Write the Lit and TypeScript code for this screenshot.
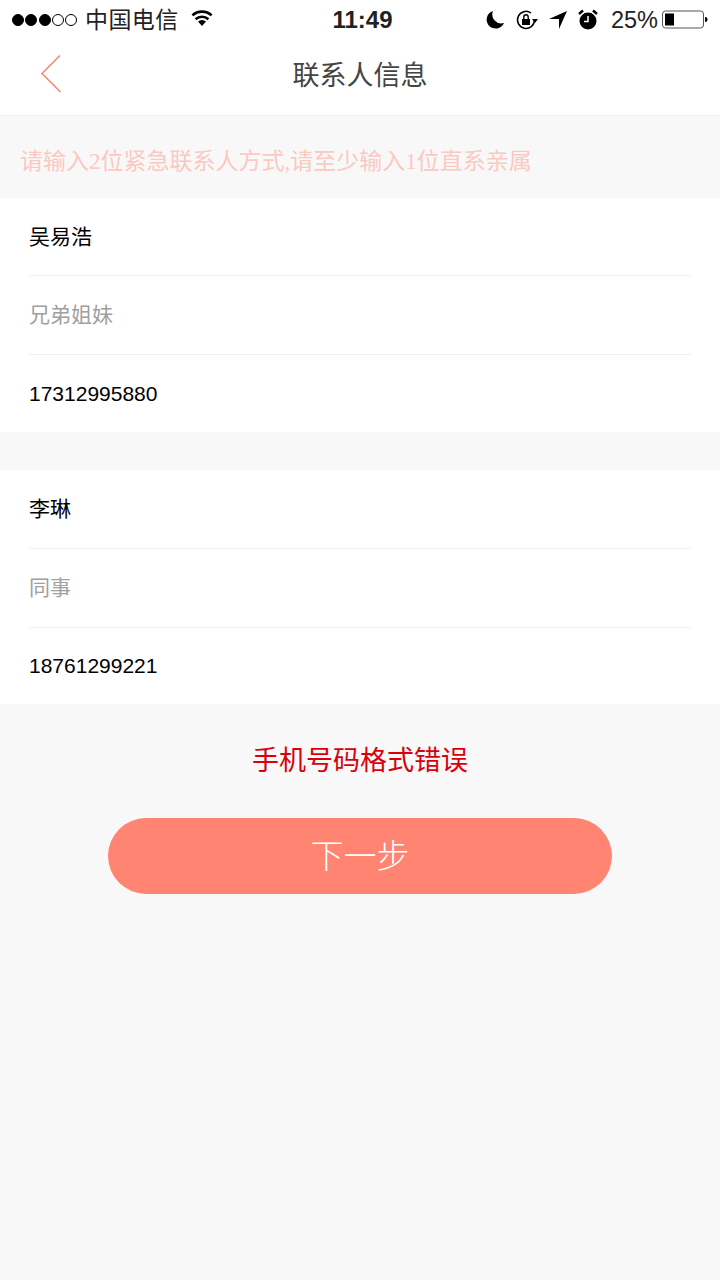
import { LitElement, html, css } from "lit";
import { customElement } from "lit/decorators.js";

@customElement("app-root")
export class AppRoot extends LitElement {
  static styles = css`
    :host { display: block; width: 720px; height: 1280px; background: #f8f8f8; font-family: "Liberation Sans", "Noto Sans CJK SC", sans-serif; overflow: hidden; }
    .top { background: #fff; height: 115px; border-bottom: 1px solid #f2f2f2; }
    .status { height: 40px; display: flex; align-items: center; padding: 0 12px; position: relative; color: #111; font-size: 24px; }
    .dots { display: flex; gap: 1.250px; margin-right: 8px; }
    .dot { width: 12px; height: 12px; border-radius: 50%; background: #000; border: 1px solid #000; box-sizing: border-box; }
    .dot.off { background: none; }
    .carrier { font-size: 23px; letter-spacing: 0.400px; color: #222; position: relative; top: -2px; }
    .wifi { margin-left: 11px; position: relative; top: -2px; }
    .time { position: absolute; left: 5px; right: 0; top: 5px; text-align: center; font-size: 24px; line-height: 30px; font-weight: 700; color: #222; }
    .right { margin-left: auto; display: flex; align-items: center; z-index: 1; margin-right: -1px; }
    .moon { margin-right: 10px; }
    .lock { margin-right: 9px; }
    .arrow { margin-right: 10px; }
    .pct { font-size: 23.500px; margin-left: 13px; color: #222; }
    .battery { margin-left: 4px; }
    .nav { height: 75px; display: flex; align-items: center; justify-content: center; position: relative; }
    .back { position: absolute; left: 40px; top: 14px; }
    .title { font-size: 27px; line-height: 40px; color: #444; position: relative; top: -2px; }
    .hint { height: 82px; display: flex; align-items: center; padding-left: 20px; padding-top: 10px; box-sizing: border-box; font-size: 23px; line-height: 30px; color: #fbc9c1; font-family: "Liberation Serif", "Noto Sans CJK SC", serif; }
    .card { background: #fff; padding: 0 29px; }
    .row { height: 78px; box-sizing: border-box; display: flex; align-items: center; font-size: 21px; line-height: 30px; color: #000; border-bottom: 1px solid #f0f0f0; }
    .row:nth-child(2) { height: 79px; }
    .row:last-child { height: 77px; border-bottom: none; }
    .card.second .row:first-child { height: 79px; }
    .card.second .row:last-child { height: 76px; }
    .row.muted { color: #a0a0a0; }
    .gap { height: 38px; }
    .err { text-align: center; color: #d9000b; font-size: 27px; margin-top: 37px; height: 40px; line-height: 40px; }
    .btn { margin: 37px auto 0; width: 504px; height: 76px; border-radius: 38px; background: #ff8572; color: #fff; font-size: 33px; font-weight: 300; line-height: 40px; display: flex; align-items: center; justify-content: center; box-sizing: border-box; padding-top: 2px; }
  `;

  private row(text: string, muted = false) {
    return html`<div class="row ${muted ? "muted" : ""}">${text}</div>`;
  }

  render() {
    return html`
      <div class="top">
        <div class="status">
          <div class="dots">
            <span class="dot"></span><span class="dot"></span><span class="dot"></span><span class="dot off"></span><span class="dot off"></span>
          </div>
          <span class="carrier">中国电信</span>
          <svg class="wifi" width="24" height="18" viewBox="0 0 24 18"><path d="M12 17 8 12.600a6 6 0 0 1 8 0Z" fill="#000"/><path d="M5.600 10.200a9.400 9.400 0 0 1 12.800 0M2.400 6.400a14 14 0 0 1 19.200 0" fill="none" stroke="#000" stroke-width="2.600"/></svg>
          <div class="time">11:49</div>
          <div class="right">
            <svg class="moon" width="20" height="20" viewBox="0 0 20 20"><path d="M8 1a9 9 0 1 0 11 12A9 9 0 0 1 8 1Z" fill="#000"/></svg>
            <svg class="lock" width="24" height="22" viewBox="0 0 24 22"><path d="M19.500 11A8.500 8.500 0 1 1 16 4" fill="none" stroke="#000" stroke-width="1.500"/><path d="m17 10 6 0-3 4Z" fill="#000"/><rect x="7" y="10" width="8" height="6" fill="#000"/><path d="M8.800 10V8a2.200 2.200 0 0 1 4.400 0v2" fill="none" stroke="#000" stroke-width="1.400"/></svg>
            <svg class="arrow" width="20" height="20" viewBox="0 0 20 20"><path d="M19 1 11 19V9H1Z" fill="#000"/></svg>
            <svg width="20" height="22" viewBox="0 0 20 22"><circle cx="10" cy="12" r="8.500" fill="#000"/><path d="M10 7v5.500H6" fill="none" stroke="#fff" stroke-width="1.500"/><path d="M1 5 5 1.500M19 5l-4-3.500" stroke="#000" stroke-width="2.500"/></svg>
            <span class="pct">25%</span>
            <svg class="battery" width="47" height="20" viewBox="0 0 47 20"><rect x=".5" y="1" width="41" height="17" rx="3" fill="#fff" stroke="#555"/><rect x="3" y="3.500" width="9" height="12" fill="#000"/><path d="M43 7c2 0 2.500 1 2.500 2.500S45 12 43 12Z" fill="#000"/></svg>
          </div>
        </div>
        <div class="nav">
          <svg class="back" width="24" height="40" viewBox="0 0 24 40"><path d="M20 1.500 2 19.500 20.500 38" fill="none" stroke="#f58673" stroke-width="1.500"/></svg>
          <div class="title">联系人信息</div>
        </div>
      </div>
      <div class="hint">请输入2位紧急联系人方式,请至少输入1位直系亲属</div>
      <div class="card">${this.row("吴易浩")}${this.row("兄弟姐妹", true)}${this.row("17312995880")}</div>
      <div class="gap"></div>
      <div class="card second">${this.row("李琳")}${this.row("同事", true)}${this.row("18761299221")}</div>
      <div class="err">手机号码格式错误</div>
      <div class="btn">下一步</div>
    `;
  }
}
